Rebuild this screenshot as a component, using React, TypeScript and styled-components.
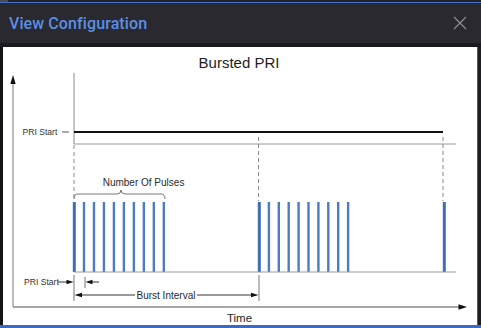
import React from "react";
import styled, { createGlobalStyle } from "styled-components";

const Global = createGlobalStyle`
  html, body { margin: 0; padding: 0; background: #1b1b20; }
  #root { width: 481px; height: 328px; overflow: hidden; }
`;

const Page = styled.div`
  width: 481px;
  height: 328px;
  display: flex;
  flex-direction: column;
  background: #1b1b20;
  font-family: Roboto, "Liberation Sans", Arial, sans-serif;
`;

const TopStrip = styled.div`
  height: 2px;
  background: #212127;
  border-bottom: 1px solid #3d6cc9;
  display: flex;
`;

const TopStub = styled.div<{ $w: number; $c: string }>`
  width: ${(p) => p.$w}px;
  height: 2px;
  background: ${(p) => p.$c};
`;

const Header = styled.div`
  height: 40px;
  background: #29292f;
  display: flex;
  align-items: center;
  justify-content: space-between;
  padding: 0 12px 0 9px;
`;

const Title = styled.h1`
  margin: 0;
  font-size: 16px;
  font-weight: 500;
  color: #5b8fe6;
  letter-spacing: 0.1px;
`;

const CloseButton = styled.button`
  width: 18px;
  height: 18px;
  padding: 0;
  border: none;
  background: transparent;
  display: flex;
  align-items: center;
  justify-content: center;
  cursor: pointer;
`;

const Divider = styled.div`
  height: 4px;
  background: #1a1a1e;
`;

const Body = styled.div`
  flex: 1;
  display: flex;
  min-height: 0;
`;

const EdgeLeft = styled.div`
  width: 3px;
  background: #141417;
`;

const EdgeRight = styled.div`
  width: 3px;
  background: #1d1d22;
  border-left: 1px solid #5c5c62;
`;

const Canvas = styled.div`
  flex: 1;
  background: #ffffff;
  overflow: hidden;
`;

const BottomBar = styled.div`
  height: 3px;
  background: #3a6ac6;
`;

const Chart = styled.svg`
  display: block;
  width: 474px;
  height: 278px;
  font-family: "Liberation Sans", Arial, sans-serif;
`;

const PULSE = "#4d7cc0";
const burst1 = Array.from({ length: 10 }, (_, i) => 74 + i * 9.98);
const burst2 = Array.from({ length: 10 }, (_, i) => 259 + i * 9.9);

const Pulse = ({ x, first }: { x: number; first?: boolean }) => (
  <rect x={x - 1.2} y={202} width={first ? 3 : 2.4} height={70} fill={first ? "#3f6eb2" : PULSE} />
);

export default function App() {
  return (
    <>
      <Global />
      <Page>
        <TopStrip>
          <TopStub $w={8} $c="#4a4a50" />
        </TopStrip>
        <Header>
          <Title>View Configuration</Title>
          <CloseButton aria-label="Close">
            <svg width="14" height="14" viewBox="0 0 14 14">
              <path d="M1 1 L13 13 M13 1 L1 13" stroke="#8c8c92" strokeWidth="1.2" fill="none" />
            </svg>
          </CloseButton>
        </Header>
        <Divider />
        <Body>
          <EdgeLeft />
          <Canvas>
            <Chart viewBox="3 47 474 278">
              <text x={239} y={68} fontSize={15} textAnchor="middle" fill="#1e1e1e">
                Bursted PRI
              </text>

              {/* Y axis */}
              <line x1={13} y1={82} x2={13} y2={307} stroke="#7a7a7a" strokeWidth={1} />
              <polygon points="13,75 10.3,84 15.7,84" fill="#111" />
              {/* X axis */}
              <line x1={13} y1={307} x2={460} y2={307} stroke="#8a8a8a" strokeWidth={1.4} />
              <polygon points="467,307 458.5,304.3 458.5,309.7" fill="#111" />

              {/* PRI start level */}
              <text x={22.5} y={134.5} fontSize={8.6} fill="#333">PRI Start</text>
              <line x1={62} y1={132} x2={69} y2={132} stroke="#444" strokeWidth={0.9} />
              <line x1={74} y1={73} x2={74} y2={144} stroke="#8a8a8a" strokeWidth={1} />
              <line x1={74} y1={132} x2={443} y2={132} stroke="#111" strokeWidth={2} />
              <line x1={74} y1={144} x2={456} y2={144} stroke="#9a9a9a" strokeWidth={1} />

              {/* dashed markers */}
              <line x1={74} y1={145} x2={74} y2={201} stroke="#8a8a8a" strokeWidth={1} strokeDasharray="4 3" />
              <line x1={258.5} y1={137} x2={258.5} y2={201} stroke="#8a8a8a" strokeWidth={1} strokeDasharray="4 3" />
              <line x1={443} y1={137} x2={443} y2={201} stroke="#8a8a8a" strokeWidth={1} strokeDasharray="4 3" />

              {/* brace */}
              <path
                d="M74 199 Q74 194 78 194 L117 194 Q121 194 121 190 Q121 194 125 194 L161 194 Q165 194 165 199"
                stroke="#555"
                strokeWidth={0.8}
                fill="none"
              />
              <text x={102.7} y={186} fontSize={10} fill="#2a2a2a">Number Of Pulses</text>

              {/* pulses */}
              {burst1.map((x, i) => (
                <Pulse key={`a${i}`} x={x} first={i === 0} />
              ))}
              {burst2.map((x, i) => (
                <Pulse key={`b${i}`} x={x} first={i === 0} />
              ))}
              <Pulse x={444} first />
              <line x1={74} y1={272} x2={456} y2={272} stroke="#9a9a9a" strokeWidth={1} />

              {/* PRI start interval */}
              <line x1={74} y1={275} x2={74} y2={301} stroke="#777" strokeWidth={1} />
              <line x1={85} y1={277} x2={85} y2={288} stroke="#777" strokeWidth={1} />
              <text x={24} y={285} fontSize={8.6} fill="#333">PRI Start</text>
              <line x1={58} y1={282} x2={68} y2={282} stroke="#333" strokeWidth={1} />
              <polygon points="73.5,282 66.5,279.8 66.5,284.2" fill="#111" />
              <line x1={91} y1={282} x2={99} y2={282} stroke="#333" strokeWidth={1} />
              <polygon points="85.5,282 92.5,279.8 92.5,284.2" fill="#111" />

              {/* Burst interval */}
              <line x1={259} y1={275} x2={259} y2={301} stroke="#777" strokeWidth={1} />
              <line x1={81} y1={295} x2={135} y2={295} stroke="#333" strokeWidth={1} />
              <polygon points="74.5,295 82,292.7 82,297.3" fill="#111" />
              <text x={136.5} y={298.5} fontSize={10} fill="#2a2a2a">Burst Interval</text>
              <line x1={197} y1={295} x2={252} y2={295} stroke="#333" strokeWidth={1} />
              <polygon points="258.5,295 251,292.7 251,297.3" fill="#111" />

              <text x={239.5} y={322.3} fontSize={11.5} textAnchor="middle" fill="#1e1e1e">Time</text>
            </Chart>
          </Canvas>
          <EdgeRight />
        </Body>
        <BottomBar />
      </Page>
    </>
  );
}
